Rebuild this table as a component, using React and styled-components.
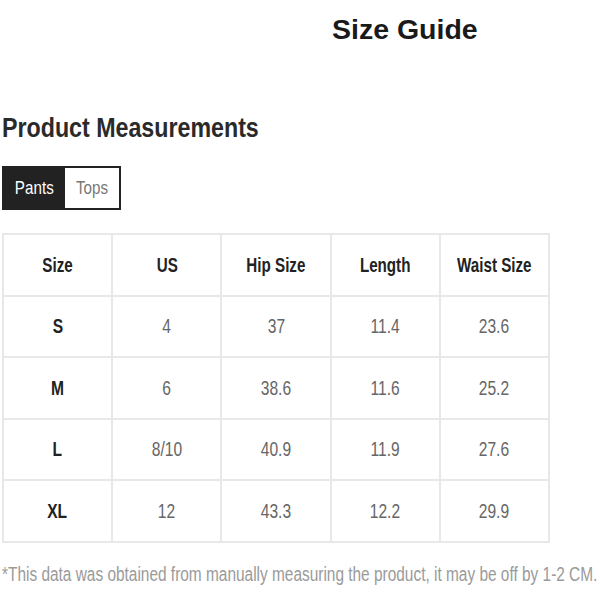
import React, { useState } from "react";
import styled, { createGlobalStyle } from "styled-components";

const GlobalStyle = createGlobalStyle`
  body {
    margin: 0;
    background: #ffffff;
    font-family: "Liberation Sans", Arial, sans-serif;
  }
`;

const Page = styled.div`
  width: 600px;
  height: 600px;
  overflow: hidden;
  padding: 0 2px;
  box-sizing: border-box;
`;

// the reference text is set in a narrow face; squeeze the glyphs horizontally
const Squeeze = styled.span`
  display: inline-block;
  white-space: nowrap;
  transform: scaleX(${({ $s }) => $s});
  transform-origin: ${({ $origin }) => $origin || "center"};
`;

const Title = styled.h1`
  margin: 0;
  padding: 13px 0 0 330px;
  font-size: 28.5px;
  font-weight: 700;
  color: #1a1a1a;
  line-height: 32px;
`;

const Heading = styled.h2`
  margin: 0;
  padding-top: 68px;
  font-size: 27px;
  font-weight: 700;
  color: #2a2a2a;
  line-height: 30px;
`;

const Tabs = styled.div`
  display: inline-flex;
  margin-top: 23px;
  border: 2px solid #222;
  height: 40px;
`;

const Tab = styled.button`
  border: none;
  margin: 0;
  padding: 0;
  width: ${({ $w }) => $w}px;
  background: ${({ $active }) => ($active ? "#222" : "#fff")};
  color: ${({ $active }) => ($active ? "#fff" : "#777")};
  font-family: inherit;
  font-size: 19px;
  cursor: pointer;
`;

const Table = styled.table`
  margin-top: 23px;
  border-collapse: collapse;
  width: 548px;
  table-layout: fixed;
`;

const Cell = styled.td`
  border: 2px solid #e8e8e8;
  height: 59.5px;
  padding: 0;
  text-align: center;
  font-size: 20.5px;
  font-weight: ${({ $bold }) => ($bold ? 700 : 400)};
  color: ${({ $bold }) => ($bold ? "#222" : "#666")};
`;

const Note = styled.p`
  margin: 20px 0 0;
  width: 596px;
  overflow: hidden;
  font-size: 20px;
  color: #9a9a9a;
`;

const headers = ["Size", "US", "Hip Size", "Length", "Waist Size"];
const rows = [
  ["S", "4", "37", "11.4", "23.6"],
  ["M", "6", "38.6", "11.6", "25.2"],
  ["L", "8/10", "40.9", "11.9", "27.6"],
  ["XL", "12", "43.3", "12.2", "29.9"],
];

export default function App() {
  const [tab, setTab] = useState("Pants");
  return (
    <Page>
      <GlobalStyle />
      <Title>Size Guide</Title>
      <Heading>
        <Squeeze $s={0.86} $origin="left">Product Measurements</Squeeze>
      </Heading>
      <Tabs>
        <Tab $w={61} $active={tab === "Pants"} onClick={() => setTab("Pants")}>
          <Squeeze $s={0.8}>Pants</Squeeze>
        </Tab>
        <Tab $w={54} $active={tab === "Tops"} onClick={() => setTab("Tops")}>
          <Squeeze $s={0.8}>Tops</Squeeze>
        </Tab>
      </Tabs>
      <Table>
        <tbody>
          <tr>
            {headers.map((h) => (
              <Cell key={h} $bold>
                <Squeeze $s={0.74}>{h}</Squeeze>
              </Cell>
            ))}
          </tr>
          {rows.map((r) => (
            <tr key={r[0]}>
              {r.map((v, i) => (
                <Cell key={i} $bold={i === 0}>
                  <Squeeze $s={0.76}>{v}</Squeeze>
                </Cell>
              ))}
            </tr>
          ))}
        </tbody>
      </Table>
      <Note>
        <Squeeze $s={0.771} $origin="left">
          *This data was obtained from manually measuring the product, it may be off by 1-2 CM.
        </Squeeze>
      </Note>
    </Page>
  );
}
